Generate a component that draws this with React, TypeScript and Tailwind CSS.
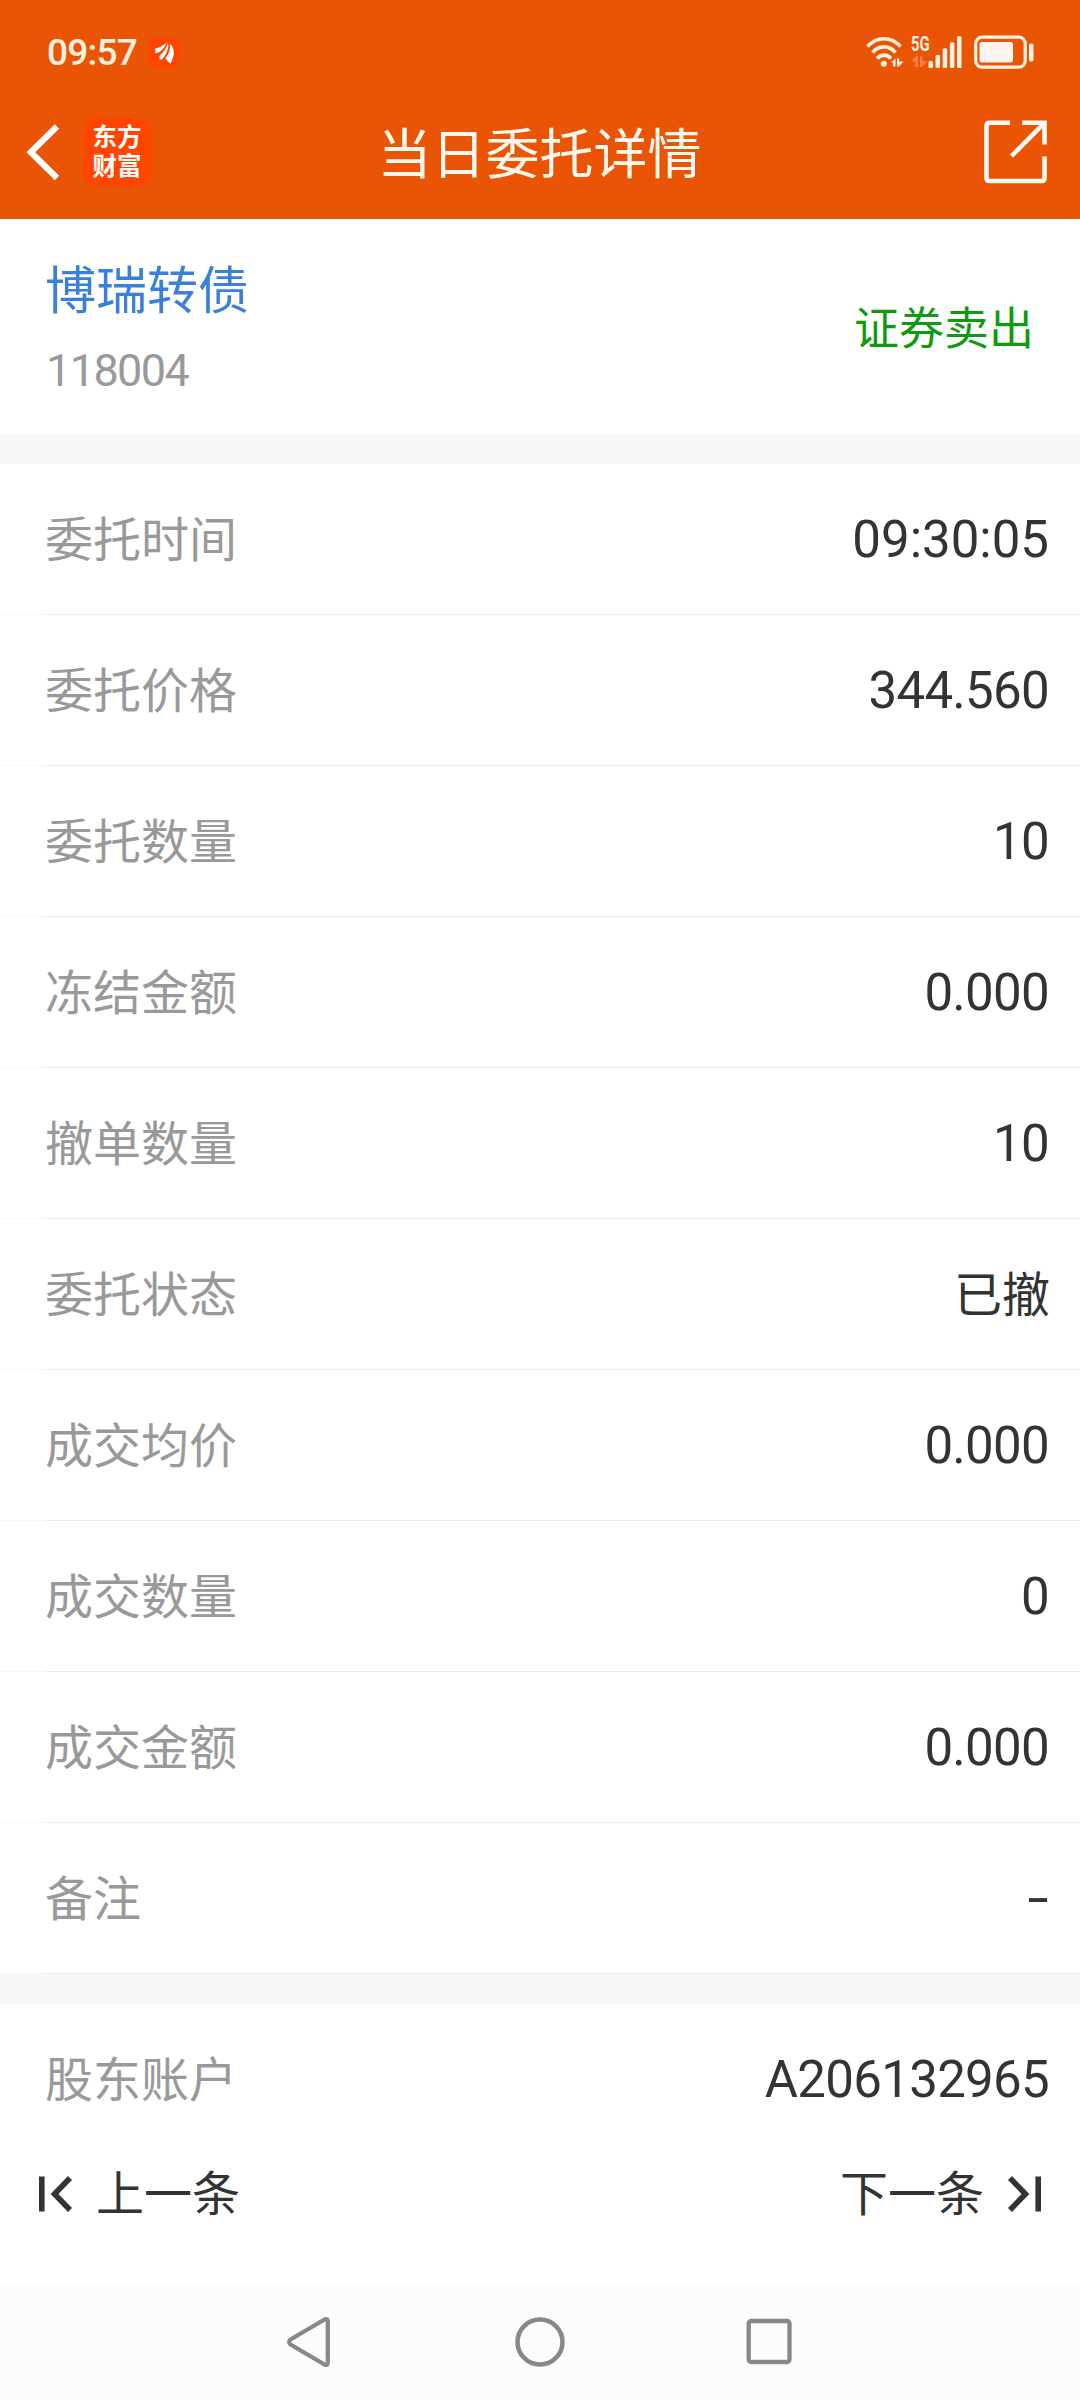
import React from 'react';

type Row = { label: string; value: string };

const rows: Row[] = [
  { label: '委托时间', value: '09:30:05' },
  { label: '委托价格', value: '344.560' },
  { label: '委托数量', value: '10' },
  { label: '冻结金额', value: '0.000' },
  { label: '撤单数量', value: '10' },
  { label: '委托状态', value: '已撤' },
  { label: '成交均价', value: '0.000' },
  { label: '成交数量', value: '0' },
  { label: '成交金额', value: '0.000' },
  { label: '备注', value: '-' },
];

const StatusBar: React.FC = () => (
  <div className="h-[84px] pt-5 pl-[47px] pr-[46px] flex items-center justify-between text-[#fff0e0]">
    <div className="flex items-center">
      <span className="w-[102px] text-[37px] leading-none font-medium tracking-[-0.8px]">09:57</span>
      <svg className="mt-[2px]" width="30" height="30" viewBox="0 0 30 30">
        <rect width="30" height="30" rx="6" fill="#ff4500" />
        <path d="M6 10.500C10 10 13.500 8 17 5C16 10 12 14 6.500 15.500Z" fill="#fff" />
        <path d="M18.800 5C20.300 9 18 15.500 13 21.500L10.500 21V18C14.500 14 17.800 10 18.800 5Z" fill="#fff" />
        <path d="M20.800 6C25.500 9 26.500 17 21.500 25.500L18.500 23L16.500 20C20 15.500 21.500 11.500 20.800 6Z" fill="#fff" />
      </svg>
    </div>
    <div className="flex items-center">
      <svg width="38" height="34" viewBox="0 0 38 34" fill="none" stroke="currentColor" strokeWidth="3.600">
        <path d="M1.500 11.500C11 1.200 25 1.200 34.500 11.500" />
        <path d="M6.500 17.500C13 10 23 10 29.500 17.500" />
        <path d="M11 23.500C15 19 21 19 25 23.500" />
        <circle cx="17.800" cy="28.800" r="3" fill="currentColor" stroke="none" />
        <path d="M25 27.500L29.500 23.500V31.500H27V27.500ZM31 23.500H33.200V26.500H37.500L33 31.500H31Z" fill="currentColor" stroke="none" />
      </svg>
      <div className="ml-[7px] w-[17px] h-[34px] flex flex-col">
        <span className="h-[18px] w-[24px] text-[20px] leading-[18px] font-bold origin-left scale-x-[0.74]">5G</span>
        <svg className="mt-[3px] text-[#ff7f48]" width="17" height="12" viewBox="0 0 17 12" fill="currentColor">
          <path d="M0 5.500L5 0H7V11H4.200V5.500Z" />
          <path d="M9 0H11.500V5H16L11 11H9Z" />
        </svg>
      </div>
      <svg width="36" height="34" viewBox="0 0 36 34" fill="currentColor">
        <rect x="0.500" y="26" width="4.500" height="7" rx="1.500" />
        <rect x="7.500" y="19.700" width="4.500" height="13.300" rx="1.500" />
        <rect x="14.700" y="13.300" width="4.500" height="19.700" rx="1.500" />
        <rect x="21.900" y="7.300" width="4.500" height="25.700" rx="1.500" />
        <rect x="29" y="1.300" width="4.500" height="31.700" rx="1" />
      </svg>
      <svg className="ml-[10px]" width="60" height="34" viewBox="0 0 60 34">
        <rect x="1.700" y="2.200" width="49.500" height="30" rx="6.500" fill="none" stroke="currentColor" strokeWidth="3.200" />
        <rect x="5.500" y="7" width="33.500" height="20.500" rx="2.500" fill="#fff5f0" />
        <rect x="55" y="8.500" width="4.500" height="18" rx="1.800" fill="currentColor" />
      </svg>
    </div>
  </div>
);

const TitleBar: React.FC = () => (
  <div className="h-[135px] pl-[26px] pr-[32px] grid grid-cols-[1fr_auto_1fr] items-center">
    <div className="flex items-center">
      <svg width="34" height="56" viewBox="0 0 34 56" fill="none" stroke="#fff" strokeWidth="6.200">
        <path d="M31 2.500L4.800 28.200L31 54" />
      </svg>
      <div className="ml-[23px] w-[68px] h-[68px] rounded-[15px] bg-[#ff4500] text-white flex flex-col items-center justify-center text-[24.5px] leading-[29px] font-bold">
        <span>东方</span>
        <span>财富</span>
      </div>
    </div>
    <h1 className="pt-[8px] pl-[5px] text-[54px] leading-none text-[#fff8ee] font-normal">当日委托详情</h1>
    <svg className="justify-self-end" width="64" height="64" viewBox="0 0 64 64" fill="none" stroke="#fffaf0" strokeWidth="4.600">
      <path d="M26 2.800H5.500Q2.500 2.800 2.500 5.800V58Q2.500 61 5.500 61H57.500Q60.500 61 60.500 58V36.500" />
      <path d="M38.200 2.800H60.500V24.500" />
      <path d="M60 3.300L27.500 36" />
    </svg>
  </div>
);

const Value: React.FC<{ value: string }> = ({ value }) => {
  if (value === '已撤') return <span className="pt-[3px] text-[48px]">{value}</span>;
  if (value === '-') return <span className="text-[51px] origin-right scale-x-[1.5] pr-px">{value}</span>;
  if (value.includes(':')) return <span className="pr-px text-[51px]">{value}</span>;
  return <span className="pr-px text-[51px] tracking-[-0.7px]">{value}</span>;
};

const DetailRow: React.FC<Row & { divider?: boolean }> = ({ label, value, divider = true }) => (
  <div className="h-[151px] flex flex-col">
    <div className="flex-1 pl-[45px] pr-[30px] flex items-center justify-between leading-none">
      <span className="pt-[3px] text-[48px] text-[#999]">{label}</span>
      <Value value={value} />
    </div>
    {divider && (
      <div className="h-px flex bg-[#ececec]">
        <div className="w-[45px] bg-[#f8f8f8]" />
      </div>
    )}
  </div>
);

const App: React.FC = () => {
  return (
    <div className="w-[1080px] h-[2400px] bg-white text-[#333] flex flex-col overflow-hidden font-[Roboto,'Noto_Sans_CJK_SC',sans-serif]">
      <header className="h-[219px] bg-[#e95504]">
        <StatusBar />
        <TitleBar />
      </header>

      <section className="h-[215px] pt-[6px] pl-[45px] pr-[46px] flex items-center justify-between">
        <div className="flex flex-col leading-none">
          <span className="text-[51px] text-[#3b80d8]">博瑞转债</span>
          <span className="mt-[31px] pl-px text-[45px] text-[#999] tracking-[-1.6px]">118004</span>
        </div>
        <span className="text-[45px] leading-none text-[#0f9a0f]">证券卖出</span>
      </section>

      <div className="h-[30px] bg-[#f7f8fa]" />
      {rows.map((row) => (
        <DetailRow key={row.label} {...row} />
      ))}
      <div className="h-[30px] bg-[#f7f8fa]" />
      <DetailRow label="股东账户" value="A206132965" divider={false} />

      <footer className="flex-1 pt-[13px] px-[39px] flex items-start justify-between text-[48px] leading-none">
        <button className="flex items-center">
          <svg width="36" height="38" viewBox="0 0 36 38" fill="none" stroke="#333" strokeWidth="5.600">
            <path d="M2.800 1.500V36.500" />
            <path d="M31 3L15.500 19L31 35" />
          </svg>
          <span className="ml-[21px] pt-[3px]">上一条</span>
        </button>
        <button className="flex items-center">
          <span className="mr-[21px] pt-[3px]">下一条</span>
          <svg width="36" height="38" viewBox="0 0 36 38" fill="none" stroke="#333" strokeWidth="5.600">
            <path d="M33.200 1.500V36.500" />
            <path d="M5 3L20.500 19L5 35" />
          </svg>
        </button>
      </footer>

      <nav className="h-[116px] bg-[#fcfcfc] px-[286px] flex items-center justify-between">
        <svg width="46" height="52" viewBox="0 0 46 52" fill="none" stroke="#888" strokeWidth="4.300" strokeLinejoin="round">
          <path d="M38.500 3.500Q41.800 2 41.800 5.500V46.500Q41.800 50 38.500 48.500L4.500 28.500Q1.800 26 4.500 23.500Z" />
        </svg>
        <svg className="ml-[2px]" width="50" height="50" viewBox="0 0 50 50" fill="none" stroke="#888" strokeWidth="4.500">
          <circle cx="25" cy="25" r="22.500" />
        </svg>
        <svg width="48" height="48" viewBox="0 0 48 48" fill="none" stroke="#888" strokeWidth="4.300">
          <rect x="2.700" y="3" width="40.800" height="41" rx="2.500" />
        </svg>
      </nav>
    </div>
  );
};

export default App;
